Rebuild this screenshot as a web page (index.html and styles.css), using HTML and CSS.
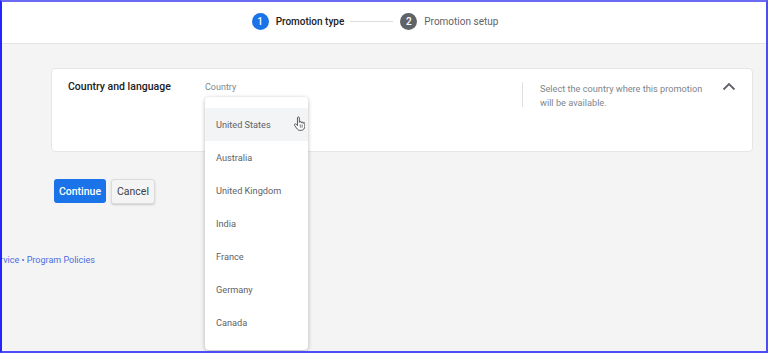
FILE: index.html
```html
<!DOCTYPE html>
<html lang="en">
<head>
  <meta charset="UTF-8" />
  <meta name="viewport" content="width=device-width, initial-scale=1.0"/>
  <title>Create promotion</title>
  <link rel="stylesheet" href="styles.css">
</head>
<body>
  <div class="frame">

    <!-- Stepper -->
    <header class="top-bar">
      <div class="stepper">
        <span class="step-num active">1</span>
        <span class="step-label active">Promotion type</span>
        <span class="step-line"></span>
        <span class="step-num">2</span>
        <span class="step-label">Promotion setup</span>
      </div>
    </header>

    <div class="content">
      <!-- Country and language card -->
      <section class="card">
        <div class="card-title">Country and language</div>

        <div class="field">
          <div class="field-label">Country</div>

          <ul class="menu">
            <li class="menu-item hovered">
              United States
              <svg class="pointer" width="12" height="15" viewBox="0 0 14 17">
                <path d="M5.2 2c0-.7.5-1.2 1.1-1.2s1.1.5 1.1 1.2v5.2c0-.7.5-1.1 1.1-1.1s1.1.5 1.1 1.1v.6c0-.6.5-1.1 1.1-1.1s1.1.5 1.1 1.1v.6c0-.6.4-1 1-1s1 .4 1 1v3.4c0 2.5-1.9 4.7-4.4 4.7H8c-1.3 0-2.4-.6-3.1-1.6L1.9 10.8c-.4-.6-.3-1.3.3-1.7.5-.3 1.2-.2 1.6.3l1.4 1.6z" fill="#fff" stroke="#3c4043" stroke-width="1" stroke-linejoin="round"/>
                <path d="M8.5 10v3M10.6 10v3" stroke="#3c4043" stroke-width=".8" stroke-linecap="round"/>
              </svg>
            </li>
            <li class="menu-item">Australia</li>
            <li class="menu-item">United Kingdom</li>
            <li class="menu-item">India</li>
            <li class="menu-item">France</li>
            <li class="menu-item">Germany</li>
            <li class="menu-item">Canada</li>
          </ul>
        </div>

        <div class="divider"></div>

        <p class="help">Select the country where this promotion will be available.</p>

        <svg class="chevron" width="14" height="9" viewBox="0 0 14 9">
          <polyline points="1.5,7.5 7,2 12.5,7.5" fill="none" stroke="#5f6368" stroke-width="1.8"/>
        </svg>
      </section>

      <div class="actions">
        <button class="btn primary">Continue</button>
        <button class="btn secondary">Cancel</button>
      </div>
    </div>

    <footer class="footer">
      <a href="#">rvice</a> • <a href="#">Program Policies</a>
    </footer>
  </div>
</body>
</html>
```

FILE: styles.css
```css
body {
  margin: 0;
  padding: 0;
  width: 768px;
  height: 353px;
  overflow: hidden;
  font-family: Roboto, "Liberation Sans", sans-serif;
  background: #f4f4f4;
}

.frame {
  box-sizing: border-box;
  height: 353px;
  border: 2px solid #4d4df6;
  border-top-color: #6a6af2;
  border-left-color: #2424ff;
  background: #f4f4f4;
  overflow: hidden;
}

/* header / stepper */
.top-bar {
  height: 42px;
  background: #fff;
  border-bottom: 1px solid #e4e4e4;
  display: flex;
  justify-content: center;
  align-items: center;
  padding-right: 18px;
  padding-bottom: 2px;
  box-sizing: border-box;
}

.stepper {
  display: flex;
  align-items: center;
}

.step-num {
  width: 17px;
  height: 17px;
  border-radius: 50%;
  background: #5f6368;
  color: #fff;
  font-size: 10px;
  font-weight: 500;
  display: flex;
  justify-content: center;
  align-items: center;
}

.step-num.active {
  background: #1a73e8;
}

.step-label {
  margin-left: 7px;
  font-size: 10px;
  color: #5f6368;
}

.step-label.active {
  color: #202124;
  font-weight: 500;
}

.step-line {
  width: 43px;
  height: 1px;
  background: #dadce0;
  margin: 0 7px 0 6px;
}

/* main */
.content {
  padding: 24px 13px 0 49px;
}

.card {
  height: 84px;
  box-sizing: border-box;
  background: #fff;
  border: 1px solid #e6e6e6;
  border-radius: 4px;
  display: flex;
  align-items: flex-start;
}

.card-title {
  width: 137px;
  padding: 10px 0 0 16px;
  font-size: 10.5px;
  font-weight: 500;
  color: #202124;
  line-height: 16px;
}

.field {
  position: relative;
  width: 317px;
  padding-top: 12px;
}

.field-label {
  font-size: 9px;
  line-height: 12px;
  color: #80868b;
}

.menu {
  position: absolute;
  top: 28px;
  left: 0;
  width: 103px;
  margin: 0;
  padding: 11px 0;
  list-style: none;
  background: #fff;
  border-radius: 4px;
  box-shadow: 0 1px 4px rgba(0, 0, 0, 0.28);
  z-index: 5;
}

.menu-item {
  position: relative;
  height: 33px;
  line-height: 33px;
  padding-left: 11px;
  font-size: 9.2px;
  color: #5f6368;
}

.menu-item.hovered {
  background: #f3f4f5;
}

.pointer {
  position: absolute;
  left: 88px;
  top: 8px;
}

.divider {
  width: 1px;
  height: 25px;
  margin-top: 13px;
  background: #e0e0e0;
}

.help {
  width: 170px;
  margin: 13px 0 0 17px;
  font-size: 9.2px;
  line-height: 14px;
  color: #80868b;
}

.chevron {
  margin: 13px 0 0 12px;
}

.actions {
  display: flex;
  gap: 5px;
  margin: 27px 0 0 3px;
}

.btn {
  height: 24px;
  border-radius: 3px;
  font-family: Roboto, "Liberation Sans", sans-serif;
  font-size: 10.5px;
  font-weight: 500;
  cursor: pointer;
  padding: 0;
}

.btn.primary {
  width: 52px;
  background: #1a73e8;
  color: #fff;
  border: none;
}

.btn.secondary {
  width: 44px;
  height: 25px;
  background: #f4f4f4;
  color: #3c4043;
  font-weight: 400;
  border: 1px solid #dcdcdc;
  box-shadow: 0 1px 2px rgba(0, 0, 0, 0.18);
}

.footer {
  margin: 51px 0 0 -2px;
  font-size: 9px;
  color: #4a6ee0;
}

.footer a {
  color: #4a6ee0;
  text-decoration: none;
}
```
